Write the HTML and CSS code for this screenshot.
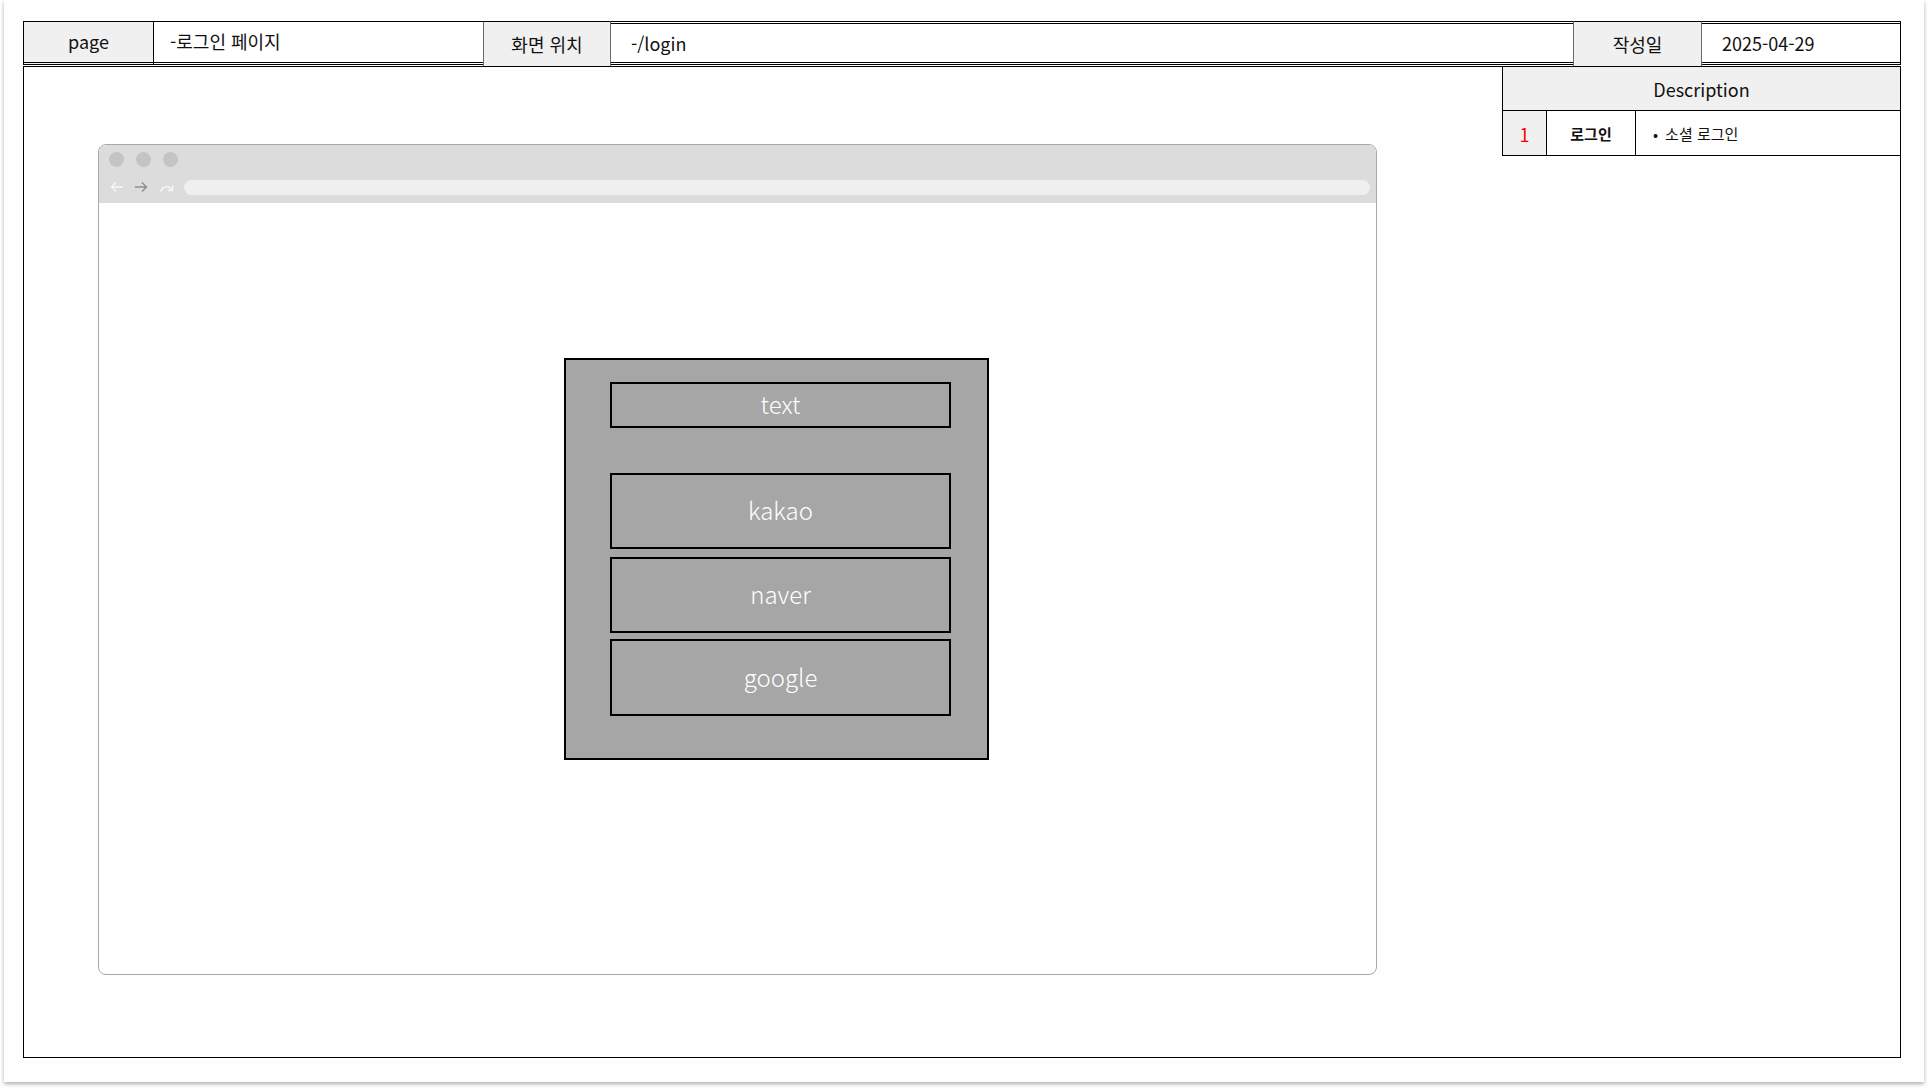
FILE: index.html
```html
<!DOCTYPE html>
<html lang="ko">
<head>
<meta charset="utf-8">
<title>로그인 페이지</title>
<link rel="stylesheet" href="styles.css">
</head>
<body>
<div class="paper">
  <div class="header-row">
    <div class="hcell label first">page</div>
    <div class="hcell value title">-로그인 페이지</div>
    <div class="hcell label tall">화면 위치</div>
    <div class="hcell value path">-/login</div>
    <div class="hcell label tall">작성일</div>
    <div class="hcell value date">2025-04-29</div>
  </div>
  <div class="frame">
    <div class="browser">
      <div class="chrome">
        <div class="dots">
          <span class="dot"></span><span class="dot"></span><span class="dot"></span>
        </div>
        <div class="navrow">
          <svg class="nav" width="14" height="12" viewBox="0 0 14 12"><path d="M13 6H1.5M6 1.5L1.5 6L6 10.5" fill="none" stroke="#f7f7f7" stroke-width="1.3"/></svg>
          <svg class="nav" width="14" height="12" viewBox="0 0 14 12"><path d="M1 6H12.5M8 1.5L12.5 6L8 10.5" fill="none" stroke="#8c8c8c" stroke-width="1.3"/></svg>
          <svg class="nav" width="16" height="12" viewBox="0 0 16 12"><path d="M2 10.5C3 5.5 9.5 4 12.5 8.5" fill="none" stroke="#f7f7f7" stroke-width="1.6"/><path d="M13.5 4.5V9.5H9" fill="none" stroke="#f7f7f7" stroke-width="1.6"/></svg>
          <div class="address"></div>
        </div>
      </div>
      <div class="viewport">
        <div class="login-box">
          <div class="lbox text-box">text</div>
          <div class="lbox btn kakao">kakao</div>
          <div class="lbox btn naver">naver</div>
          <div class="lbox btn google">google</div>
        </div>
      </div>
    </div>
    <div class="desc">
      <div class="desc-head">Description</div>
      <div class="desc-row">
        <div class="dnum">1</div>
        <div class="dname">로그인</div>
        <div class="dtext"><span class="bullet">•</span>소셜 로그인</div>
      </div>
    </div>
  </div>
</div>
</body>
</html>
```

FILE: styles.css
```css
html, body {
  margin: 0;
  padding: 0;
  background: #ffffff;
}
body {
  width: 1928px;
  height: 1088px;
  overflow: hidden;
  font-family: "Noto Sans CJK KR", "Noto Sans", sans-serif;
  color: #111;
}
.paper {
  box-sizing: border-box;
  margin-left: 4px;
  width: 1920px;
  height: 1082px;
  background: #fefefe;
  box-shadow: 0 2px 4px rgba(0, 0, 0, 0.32);
  padding: 21px 0 0 19px;
}
.header-row {
  display: flex;
  align-items: flex-start;
  height: 45px;
  width: 1878px;
}
.hcell {
  box-sizing: border-box;
  display: flex;
  align-items: center;
  font-size: 18px;
  line-height: 1;
  white-space: nowrap;
}
.label {
  background: #f0f0f0;
  justify-content: center;
  border-top: 1px solid #000;
}
.label.first {
  width: 130px;
  height: 44px;
  border-left: 1px solid #000;
  border-bottom: 3px double #000;
  padding-bottom: 3px;
}
.label.tall {
  height: 45px;
  border-left: 1px solid #6a6a6a;
  border-right: 1px solid #6a6a6a;
}
.label.tall:nth-child(3) { width: 128px; }
.label.tall:nth-child(5) { width: 129px; }
.value {
  background: #fff;
  height: 44px;
  border-bottom: 3px double #000;
}
.value.title {
  width: 330px;
  border-top: 1px solid #000;
  border-left: 1px solid #000;
  padding-left: 16px;
  padding-bottom: 3px;
}
.value.path {
  width: 962px;
  border-top: 3px double #000;
  padding-left: 20px;
}
.value.date {
  width: 199px;
  border-top: 3px double #000;
  border-right: 1px solid #000;
  padding-left: 20px;
}
.frame {
  box-sizing: border-box;
  width: 1878px;
  height: 992px;
  border: 1px solid #000;
  display: flex;
  align-items: flex-start;
}
.browser {
  box-sizing: border-box;
  width: 1279px;
  height: 831px;
  margin-left: 74px;
  margin-top: 77px;
  border: 1px solid #a9a9a9;
  border-radius: 8px;
  overflow: hidden;
  background: #fff;
  display: flex;
  flex-direction: column;
}
.chrome {
  background: #dcdcdc;
  height: 58px;
  display: flex;
  flex-direction: column;
}
.dots {
  display: flex;
  gap: 12px;
  padding: 7px 0 0 10px;
  height: 22px;
}
.dot {
  width: 15px;
  height: 15px;
  border-radius: 50%;
  background: #c4c4c4;
}
.navrow {
  display: flex;
  align-items: center;
  height: 36px;
  padding-left: 11px;
  padding-right: 6px;
}
.nav {
  display: block;
  margin-right: 10px;
}
.nav:nth-child(3) { margin-left: 1px; margin-right: 9px; }
.address {
  flex: 1;
  height: 15px;
  border-radius: 8px;
  background: #efefef;
}
.viewport {
  flex: 1;
}
.login-box {
  box-sizing: border-box;
  width: 425px;
  height: 402px;
  margin-left: 465px;
  margin-top: 155px;
  background: #a6a6a6;
  border: 2px solid #000;
  padding: 22px 0 0 44px;
  display: flex;
  flex-direction: column;
}
.lbox {
  box-sizing: border-box;
  width: 341px;
  border: 2px solid #000;
  display: flex;
  align-items: center;
  justify-content: center;
  color: #ffffff;
  font-family: "Noto Sans CJK KR", "Noto Sans", sans-serif;
  font-weight: 300;
  font-size: 24px;
  line-height: 1;
  padding-bottom: 2px;
}
.text-box { height: 46px; margin-bottom: 45px; }
.kakao { height: 76px; margin-bottom: 8px; }
.naver { height: 76px; margin-bottom: 6px; }
.google { height: 77px; }
.desc {
  box-sizing: border-box;
  margin-left: auto;
  width: 398px;
  border-left: 1px solid #000;
}
.desc-head {
  box-sizing: border-box;
  height: 44px;
  background: #f0f0f0;
  border-bottom: 1px solid #000;
  display: flex;
  align-items: center;
  justify-content: center;
  font-size: 18px;
}
.desc-row {
  box-sizing: border-box;
  display: flex;
  height: 45px;
  border-bottom: 1px solid #000;
}
.desc-row > div {
  box-sizing: border-box;
  display: flex;
  align-items: center;
}
.dnum {
  width: 44px;
  background: #f0f0f0;
  border-right: 1px solid #000;
  justify-content: center;
  color: #ff0000;
  font-size: 18px;
  padding-top: 2px;
}
.dname {
  width: 89px;
  border-right: 1px solid #000;
  justify-content: center;
  font-size: 15px;
  font-weight: 700;
}
.dtext {
  flex: 1;
  padding-left: 17px;
  font-size: 15px;
}
.bullet {
  font-size: 15px;
  margin-right: 7px;
}
```
